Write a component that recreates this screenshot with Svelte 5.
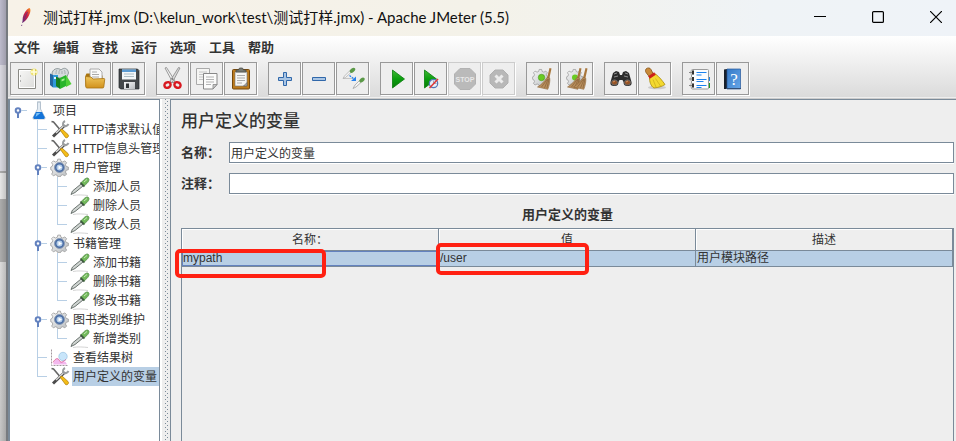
<script>
  const menus = ['文件', '编辑', '查找', '运行', '选项', '工具', '帮助'];

  const groups = [
    [['new', '新建'], ['templates', '模板'], ['open', '打开'], ['save', '保存']],
    [['cut', '剪切'], ['copy', '复制'], ['paste', '粘贴']],
    [['plus', '全部展开'], ['minus', '全部折叠'], ['toggle', '切换']],
    [['play', '启动'], ['playnow', '不停顿开始'], ['stop', '停止', true], ['shutdown', '关闭', true]],
    [['clear', '清除'], ['clearall', '清除全部']],
    [['search', '搜索'], ['broom', '重置搜索']],
    [['list', '函数助手'], ['help', '帮助文档']]
  ];

  const tree = [
    {
      icon: 'flask', label: '项目', children: [
        { icon: 'tools', label: 'HTTP请求默认值' },
        { icon: 'tools', label: 'HTTP信息头管理器' },
        {
          icon: 'gear', label: '用户管理', children: [
            { icon: 'dropper', label: '添加人员' },
            { icon: 'dropper', label: '删除人员' },
            { icon: 'dropper', label: '修改人员' }
          ]
        },
        {
          icon: 'gear', label: '书籍管理', children: [
            { icon: 'dropper', label: '添加书籍' },
            { icon: 'dropper', label: '删除书籍' },
            { icon: 'dropper', label: '修改书籍' }
          ]
        },
        {
          icon: 'gear', label: '图书类别维护', children: [
            { icon: 'dropper', label: '新增类别' }
          ]
        },
        { icon: 'chart', label: '查看结果树' },
        { icon: 'tools', label: '用户定义的变量', selected: true }
      ]
    }
  ];

  let name = $state('用户定义的变量');
  let comment = $state('');
</script>

{#snippet gearBody()}
  <path d="M10 3h3l.6 2.400 2 .9L18 5l2 2-1.300 2.300.8 2 2.500.7v3l-2.500.7-.8 2L20 20l-2 2-2.400-1.300-2 .8L13 23h-3l-.6-1.500-2-.8L5 22l-2-2 1.300-2.300-.8-2L2 15v-3l1.500-.7.8-2L3 7l2-2 2.400 1.300 2-.9z" fill="url(#silver)" stroke="#999" stroke-width=".9" />
{/snippet}

{#snippet brush()}
  <path d="M19.500 2l2 .6-2.200 10-2.300-.6z" fill="#a8763c" />
  <path d="M17 11.500l2.800.8c.2 3.500-.4 7-2 11L7.500 21c4-2.500 7-5.500 9.500-9.500z" fill="#b98f5d" stroke="#8d6538" stroke-width=".6" />
  <path d="M17.500 13l-6 8M18.200 13l-3.700 9M19 13l-2 9" stroke="#7c5730" stroke-width=".6" fill="none" />
{/snippet}

{#snippet toolIcon(kind)}
  <svg width="25" height="25" viewBox="0 0 25 25" aria-hidden="true">
    {#if kind === 'new'}
      <path d="M4.500 3.500h17v19h-17z" fill="#fff" stroke="#8a8a85" />
      <path d="M6 5h14v16H6z" fill="url(#paper)" />
      <path d="M6 10h1M6 15h1" stroke="#777" />
      <circle cx="20" cy="6" r="3.500" fill="#f2e24c" opacity=".75" /><path d="M20 3v6M17 6h6" stroke="#fffde0" stroke-width="1.500" />
    {:else if kind === 'templates'}
      <path d="M4 8c0-5 6-7 9-4 3-3 7-2 7.500 3l-2 5H5z" fill="#d5dadc" stroke="#7f898c" stroke-width=".8" />
      <path d="M8 8c0-2 0-3 1-4M11 8c0-2 0-3 1-4M14 8V5M17 8c0-2 0-3-1-4" stroke="#9aa2a6" fill="none" stroke-width=".8" />
      <path d="M2 7.500l3 1.500v12.500L2 19z" fill="#2565a0" />
      <path d="M5 9h5v12.500H5z" fill="#2f98db" /><path d="M6 11h2v2H6z" fill="#e6f4ff" />
      <path d="M8 10.500l4 2v10.500l-4-3z" fill="#158020" />
      <path d="M12 12l6-3v11l-6 3z" fill="#29b52b" />
      <path d="M18 9l5.500 9-5.500 3z" fill="#50cf38" /><path d="M13.500 13.500l3-1.200v2l-3 1.200z" fill="#a6ef91" />
    {:else if kind === 'open'}
      <path d="M3.500 9.500l1-2h5l2 2h9v11h-17z" fill="#a8740e" />
      <path d="M8 3h9l3 3v9H8z" fill="#fafafa" stroke="#999" stroke-width=".8" />
      <path d="M10 6h5M10 8.500h7M10 11h7" stroke="#aaa" />
      <path d="M3.500 10.500l5.500.5 2 2 11-.5c.6 0 .8.5.7 1l-.9 7.500c-.1.700-.5 1-1.300 1H5c-.8 0-1.200-.5-1.200-1.200z" fill="url(#folder)" stroke="#a87211" stroke-width=".8" />
    {:else if kind === 'save'}
      <path d="M3 3h18.500L23 4.500V23H4.500L3 21.500z" fill="#44484a" stroke="#24282b" stroke-width=".7" />
      <path d="M6 3.500h14v10H6z" fill="#f1f6f8" /><path d="M6 3.500h14v2.500H6z" fill="#5a9bd2" />
      <path d="M8 8h10M8 10.500h10" stroke="#aabcc4" />
      <path d="M8 16h11v7H8z" fill="url(#silver)" /><path d="M10 17.500h3v4.500h-3z" fill="#303436" />
    {:else if kind === 'cut'}
      <path d="M5 2l1.500-.5L15 15l-2 2z" fill="#eee" stroke="#858585" stroke-width=".8" />
      <path d="M20 2l-1.500-.5L10 15l2 2z" fill="#dadada" stroke="#858585" stroke-width=".8" />
      <circle cx="12.500" cy="13" r=".8" fill="#555" />
      <ellipse cx="7.500" cy="19" rx="3.200" ry="2.700" transform="rotate(-30 7.500 19)" fill="none" stroke="#d81920" stroke-width="2.400" />
      <ellipse cx="17.500" cy="19" rx="3.200" ry="2.700" transform="rotate(30 17.500 19)" fill="none" stroke="#d81920" stroke-width="2.400" />
    {:else if kind === 'copy'}
      <path d="M2.500 2.500h13v16h-13z" fill="#f5f5f3" stroke="#aaa" /><path d="M5 6h8M5 8.500h8M5 11h4M5 13.500h4" stroke="#c6c6c6" />
      <path d="M9.500 7.500h13.500v11l-4 4.500H9.500z" fill="#fbfbfa" stroke="#888" /><path d="M12 11h8M12 13.500h8M12 16h8M12 18.500h5" stroke="#b3b3b3" />
      <path d="M23 18.500h-4V23z" fill="#ccc" stroke="#888" stroke-width=".8" />
    {:else if kind === 'paste'}
      <rect x="4.500" y="3.500" width="17" height="19.500" rx="1" fill="#bd7b1c" stroke="#75480c" />
      <path d="M7 6h12v14H7z" fill="#f6f6f4" stroke="#777" stroke-width=".6" />
      <path d="M9 9.500h8M9 12h8M9 14.500h8M9 17h5" stroke="#aaa" />
      <path d="M8 6V4h2.500l1-2h3l1 2H18v2z" fill="#777a73" stroke="#454843" stroke-width=".7" />
      <path d="M15.500 20l3.500-3.500V20z" fill="#aaa" stroke="#555" stroke-width=".5" />
    {:else if kind === 'plus'}
      <path d="M11.500 6.500h3v5h5v3h-5v5h-3v-5h-5v-3h5z" fill="#a9c5e4" stroke="#3168aa" />
    {:else if kind === 'minus'}
      <path d="M6.500 11.500h13v3h-13z" fill="#a9c5e4" stroke="#3168aa" />
    {:else if kind === 'toggle'}
      <path d="M3 12.500h10" fill="none" stroke="#bbb" stroke-width=".8" />
      <path d="M10 4.500L4.500 10l-1.500 2.500 2.500-1L11.500 6z" fill="#f4f4f4" stroke="#aaa" stroke-width=".7" />
      <ellipse cx="12.500" cy="4.300" rx="3.200" ry="1.900" transform="rotate(-40 12.500 4.300)" fill="#5b9947" />
      <path d="M19.500 14.500L15 19l-2 3.500 3-1.500 5-4.500z" fill="#f4f4f4" stroke="#999" stroke-width=".7" />
      <ellipse cx="22" cy="14" rx="3" ry="1.900" transform="rotate(-40 22 14)" fill="#5b9947" />
      <path d="M9.500 9.500l4.500 3.500" stroke="#2882ed" stroke-width="1.200" stroke-dasharray="2 1" /><path d="M16 10.500v4.500h-5z" fill="#2882ed" />
    {:else if kind === 'play'}
      <path d="M8.500 4l12 9-12 9z" fill="url(#go)" stroke="#087e0b" stroke-width=".8" />
    {:else if kind === 'playnow'}
      <path d="M6.500 4l12 9-12 9z" fill="url(#go)" stroke="#087e0b" stroke-width=".8" />
      <circle cx="15.500" cy="17.500" r="4.200" fill="#e6eef8" stroke="#5277b5" stroke-width="1.200" />
      <path d="M15.500 14.500v3h3" stroke="#9aa8c0" fill="none" /><path d="M11.500 22L20 13" stroke="#e03735" stroke-width="1.500" />
    {:else if kind === 'stop'}
      <path d="M8 2.500h10l5.500 5.500v10L18 23.500H8L2.500 18V8z" fill="#bababa" stroke="#b2b2b2" />
      <text x="13" y="16" text-anchor="middle" font-family="Liberation Sans, sans-serif" font-size="7" font-weight="700" fill="#e8e8e8">STOP</text>
    {:else if kind === 'shutdown'}
      <path d="M9 4h8l5 5v8l-5 5H9l-5-5V9z" fill="#b8b8b8" stroke="#b0b0b0" />
      <path d="M9.500 9.500l7 7M16.500 9.500l-7 7" stroke="#ececec" stroke-width="3" />
    {:else if kind === 'clear'}
      <g transform="translate(1 1) scale(.82)">{@render gearBody()}</g>
      <circle cx="11.500" cy="11.500" r="3.200" fill="#69cb22" stroke="#469719" stroke-width=".6" />
      {@render brush()}
    {:else if kind === 'clearall'}
      <g transform="translate(1 1) scale(.82)">{@render gearBody()}</g>
      <circle cx="11" cy="11.500" r="3" fill="#69cb22" />
      <g transform="translate(-4 0)">{@render brush()}</g>
      <g transform="translate(2 0)">{@render brush()}</g>
    {:else if kind === 'search'}
      <path d="M5 7l3-2 3 1 1 3h2l1-3 3-1 3 2 2.500 9c.5 3-1 4-4 4s-4-1.500-4-4l-1-2h-3l-1 2c0 2.500-1 4-4 4s-4.500-1-4-4z" fill="#2b2b2b" />
      <path d="M6 8l3-1M20 8l-3-1M6 11l4-1M20 11l-4-1" stroke="#8b8b8b" />
      <ellipse cx="6.500" cy="16.500" rx="3" ry="2.600" fill="#985526" stroke="#696969" /><ellipse cx="19.500" cy="16.500" rx="3" ry="2.600" fill="#985526" stroke="#696969" />
      <path d="M5 16l2-1M18 16l2-1" stroke="#d39162" />
    {:else if kind === 'broom'}
      <ellipse cx="15" cy="21.500" rx="9" ry="1.800" fill="#aaa" opacity=".5" />
      <path d="M4 3c1.500-1.500 4-1.500 5 .5l2.500 5-4 2.500L4 6.500C3.300 5.300 3.300 4 4 3z" fill="#c98a3a" stroke="#865214" stroke-width=".8" />
      <path d="M7.500 11.500l6-3.500c4 3 7 7 9.500 10.500-3 2-6.500 3-11 3.500C8.500 20 7.500 15.500 7.500 11.500z" fill="#f3d92f" stroke="#a98b0a" stroke-width=".8" />
      <path d="M7 11.500l6-4" stroke="#cc2118" stroke-width="3" /><path d="M11 13.500l3 7.500M13.500 12.500l5 7.500" stroke="#c9ab18" stroke-width=".7" />
    {:else if kind === 'list'}
      <path d="M22 11h2v4h-2z" fill="#2183df" /><path d="M22 17h2v5h-2z" fill="#1a9a22" />
      <rect x="5.500" y="3.500" width="17" height="19.500" rx="1" fill="#fbfcff" stroke="#9a9a9a" />
      <path d="M10.500 6.500h10M10.500 9h5M10.500 13.500h10M10.500 15.500h7M10.500 19.500h10M10.500 21.500h5" stroke="#1a82ef" />
      <path d="M4 6.500h4M4 13h4M4 19.500h4" stroke="#ccc" stroke-width="4" /><path d="M6 4.500h2v4H6zM6 11h2v4H6zM6 17.500h2v4H6z" fill="#333" /><path d="M3 6.500h3M3 13h3M3 19.500h3" stroke="#888" />
    {:else if kind === 'help'}
      <path d="M4 3.500L7 3v20H4z" fill="#18202b" /><path d="M7 3h13.500v20H7z" fill="url(#book)" stroke="#25569a" stroke-width=".7" /><path d="M6 22.500h15" stroke="#335077" />
      <text x="14" y="18.500" text-anchor="middle" font-family="Liberation Serif, serif" font-size="17" fill="#fff">?</text>
    {/if}
  </svg>
{/snippet}

{#snippet treeIcon(kind)}
  <svg class="node-icon" width="20" height="19" viewBox="0 0 20 19" aria-hidden="true">
    {#if kind === 'flask'}
      <path d="M7.500 1h3v7l4.500 8.500c.5 1-.3 1.500-1 1.500H4c-1 0-1.500-.7-1-1.500L7.500 8z" fill="#e3ebf2" stroke="#9bacbd" stroke-width=".7" />
      <path d="M6 11h6l2.800 5.500-.8 1.500H4l-.8-1.500z" fill="#1373d8" /><path d="M6.500 12h4l-5 4z" fill="#7bc1f5" /><path d="M7 1h4" stroke="#bbc7d1" />
    {:else if kind === 'tools'}
      <path d="M1.500 1.500l2 .5 6 7" fill="none" stroke="#666" stroke-width="1.600" />
      <path d="M3 16.500L15 5" stroke="#4b4b4b" stroke-width="3" /><path d="M6 13L15 4.500" stroke="#d9d9d9" stroke-width="1.400" />
      <path d="M15 1c-2 1-2.500 3-1.500 4.500 1.500 1.300 4 .5 5-1.500" fill="none" stroke="#9a9d9f" stroke-width="2" />
      <path d="M10 10l2-1 6 5.500c1.500 1.500-.5 4-2.500 3z" fill="#f4bd17" stroke="#a87708" stroke-width=".7" />
    {:else if kind === 'gear'}
      <g transform="translate(-1 -1.500) scale(.88)">{@render gearBody()}</g>
      <circle cx="9.500" cy="9.500" r="5" fill="#4a6da5" stroke="#8b9cb5" /><circle cx="9.500" cy="9.500" r="3" fill="#b3cdea" /><path d="M8.500 7.500l3.500 2-3.500 2z" fill="#fff" />
    {:else if kind === 'dropper'}
      <path d="M3 18.500c5-1 10-.5 15 0" stroke="#c9c9c9" fill="none" stroke-width=".8" />
      <path d="M11 7l2 2L5 15.500 1 17.500 2.500 14z" fill="#cfd4d1" stroke="#6a736f" stroke-width="1" />
      <path d="M10.500 5.500l4 4" stroke="#3d5a3e" stroke-width="1.800" />
      <path d="M11.500 5.500C14 2 17 0 18.500 1.500s-.5 4.500-4 7z" fill="#72b95b" stroke="#4d8542" stroke-width=".7" /><path d="M14 5l3-2.500" stroke="#c3e8b4" />
    {:else if kind === 'chart'}
      <path d="M1.500 1.500v16H18" fill="none" stroke="#a3989e" stroke-dasharray="2 1" />
      <circle cx="13" cy="8.500" r="4.200" fill="#c8e5fa" stroke="#8dbbdc" stroke-width=".6" />
      <path d="M3 16.500c1-4 3-6 5-6 2 3 3 4 4.500 3 2-1 3.500 0 4.500 3z" fill="#f3b8ee" /><path d="M3 14.500c3-5 5-5 7-1 2 2 4-1 6-2" stroke="#dc568c" fill="none" stroke-width=".8" />
    {/if}
  </svg>
{/snippet}

{#snippet branch(nodes)}
  <ul>
    {#each nodes as node}
      <li>
        <div class="node">
          <span class="handle">
            {#if node.children}
              <svg width="20" height="19" viewBox="0 0 20 19" aria-hidden="true"><path d="M8 12v5" stroke="#6382bf" stroke-width="2" /><circle cx="8" cy="9.500" r="2.300" fill="#fff" stroke="#6382bf" stroke-width="2" /><path d="M11 9.500h6" stroke="#b8cfe5" /></svg>
            {/if}
          </span>
          {@render treeIcon(node.icon)}
          <span class="label" class:selected={node.selected}>{node.label}</span>
        </div>
        {#if node.children}{@render branch(node.children)}{/if}
      </li>
    {/each}
  </ul>
{/snippet}

<svg class="defs" width="0" height="0" aria-hidden="true">
  <defs>
    <linearGradient id="silver" x2="1" y2="1"><stop stop-color="#f7f7f7" /><stop offset="1" stop-color="#b9bdc0" /></linearGradient>
    <linearGradient id="paper" x2="1" y2="1"><stop stop-color="#f5f5f4" /><stop offset="1" stop-color="#dededc" /></linearGradient>
    <linearGradient id="folder" x2="0" y2="1"><stop stop-color="#efc65c" /><stop offset="1" stop-color="#d1911c" /></linearGradient>
    <linearGradient id="go" x2="0" y2="1"><stop stop-color="#42ba36" /><stop offset=".5" stop-color="#0b9e0e" /><stop offset="1" stop-color="#087c09" /></linearGradient>
    <linearGradient id="book" x2="1" y2="1"><stop stop-color="#3579c7" /><stop offset="1" stop-color="#66a7e9" /></linearGradient>
    <linearGradient id="feather" x1="1" x2="0" y2="1"><stop stop-color="#f79a23" /><stop offset=".45" stop-color="#d4213f" /><stop offset="1" stop-color="#682776" /></linearGradient>
  </defs>
</svg>

<div class="screen">
  <div class="desktop"></div>
  <main class="window">
    <header class="titlebar">
      <svg width="14" height="20" viewBox="0 0 14 20" aria-hidden="true"><path d="M9.500 1c1.500 1 1.200 4-.3 7S6 14 3 15.500c-1-4 0-7 1.800-10C6 3.500 8 1 9.500 1z" fill="url(#feather)" /><path d="M7.500 5L3 14l-1.500 5" stroke="#66307c" fill="none" stroke-width=".8" stroke-dasharray="12 2" /></svg>
      <h1>测试打样.jmx (D:\kelun_work\test\测试打样.jmx) - Apache JMeter (5.5)</h1>
      <div class="controls">
        <button aria-label="最小化"><svg width="12" height="12" viewBox="0 0 12 12"><path d="M0 5.500h12" stroke="#000" /></svg></button>
        <button aria-label="最大化"><svg width="12" height="12" viewBox="0 0 12 12"><rect x=".6" y=".6" width="10.800" height="10.800" rx="1" fill="none" stroke="#000" stroke-width="1.200" /></svg></button>
        <button aria-label="关闭"><svg width="12" height="12" viewBox="0 0 12 12"><path d="M0 0l12 12M12 0L0 12" stroke="#000" stroke-width="1.200" /></svg></button>
      </div>
    </header>
    <div class="chrome">
      <nav>
        {#each menus as menu}<button>{menu}</button>{/each}
      </nav>
      <div class="toolbar">
        {#each groups as group}
          <div class="group">
            {#each group as [kind, title, disabled]}
              <button aria-label={title} {disabled}>{@render toolIcon(kind)}</button>
            {/each}
          </div>
        {/each}
      </div>
    </div>
    <div class="body">
      <aside class="tree">{@render branch(tree)}</aside>
      <div class="divider"></div>
      <section class="panel">
        <h2>用户定义的变量</h2>
        <div class="field"><label for="name">名称：</label><input id="name" type="text" bind:value={name} /></div>
        <div class="field"><label for="comment">注释：</label><input id="comment" type="text" bind:value={comment} /></div>
        <h3>用户定义的变量</h3>
        <div class="table-area">
          <table>
            <thead><tr><th>名称：</th><th>值</th><th>描述</th></tr></thead>
            <tbody>
              <tr>
                <td class="focused">mypath<span class="mark first"></span></td>
                <td>/user<span class="mark second"></span></td>
                <td>用户模块路径</td>
              </tr>
            </tbody>
          </table>
        </div>
      </section>
    </div>
  </main>
</div>

<style>
  :global(body) { margin: 0; }
  .defs { position: absolute; }
  .screen {
    display: flex;
    min-height: 100vh;
    background: #eee;
    color: #333;
    font: 12px/19px "Liberation Sans", "Noto Sans CJK SC", sans-serif;
  }
  button { padding: 0; border: 0; background: none; color: inherit; font: inherit; }
  svg { display: block; flex: none; }
  .desktop {
    flex: none;
    width: 6px;
    background:
      linear-gradient(90deg, transparent, rgba(0, 0, 0, .15)),
      linear-gradient(#bcbacb 65px, #d9d8e0 65px 171px, #aaa 171px 173px, #e6e6e6 173px 199px, #acacac 199px 262px, #dcdcdc 262px, #c4c4c4);
  }
  .window {
    flex: 1;
    min-width: 0;
    display: flex;
    flex-direction: column;
    border-left: 2px solid #777b80;
  }
  .titlebar {
    display: flex;
    align-items: center;
    height: 36px;
    padding: 0 14px 0 12px;
    background: linear-gradient(90deg, #f7f2e8, #f4f2e9 50%, #eff3f6 80%, #eff3f8);
  }
  .titlebar > svg { margin-bottom: 2px; }
  h1 {
    flex: 1;
    margin: 0 0 2px 9px;
    color: #111;
    font: 15px/24px Lato, "Noto Sans CJK SC", sans-serif;
    white-space: nowrap;
  }
  .controls { display: flex; gap: 46px; margin-bottom: 2px; }
  .chrome {
    height: 61px;
    background: linear-gradient(#fff, #dadada);
    border-bottom: 1px solid #ccc;
    box-shadow: inset 0 -1px #eee;
    padding-bottom: 1px;
  }
  nav { display: flex; gap: 13px; padding: 1px 6px 3px; }
  nav button { font-size: 13px; line-height: 22px; font-weight: 700; }
  .toolbar { display: flex; gap: 11px; padding-left: 2px; }
  .group { display: flex; gap: 1px; }
  .group button {
    padding: 3px;
    border: 1px solid #999;
    background: #eee;
    box-shadow: 1px 1px #fff;
  }
  .group button:disabled { border-color: #ccc; }
  .body { flex: 1; display: flex; min-height: 0; }
  .tree {
    flex: none;
    box-sizing: border-box;
    width: 152px;
    overflow: hidden;
    padding-top: 1px;
    background: #fff;
    border: solid #7a8a99;
    border-width: 1px 1px 0 2px;
  }
  ul { margin: 0; padding: 0; list-style: none; }
  ul ul { padding-left: 20px; }
  ul ul > li {
    background:
      linear-gradient(#b8cfe5, #b8cfe5) 7px 0 / 1px 100% no-repeat,
      linear-gradient(#b8cfe5, #b8cfe5) 7px 9px / 10px 1px no-repeat;
  }
  ul ul > li:last-child {
    background:
      linear-gradient(#b8cfe5, #b8cfe5) 7px 0 / 1px 10px no-repeat,
      linear-gradient(#b8cfe5, #b8cfe5) 7px 9px / 10px 1px no-repeat;
  }
  .node { display: flex; height: 19px; white-space: nowrap; }
  .handle { flex: none; width: 20px; }
  .label {
    box-sizing: border-box;
    height: 19px;
    margin-left: 2px;
    padding: 1px 2px 0 1px;
  }
  .selected { background: #b8cfe5; }
  .divider {
    flex: none;
    width: 10px;
    background:
      linear-gradient(90deg, #fff 2px, #eee 2px 5px, transparent 5px 8px, #eee 8px),
      conic-gradient(from 270deg at 1px 1px, #7a8a99 90deg, transparent 0) 5px 0 / 4px 4px,
      conic-gradient(from 270deg at 1px 1px, #7a8a99 90deg, transparent 0) 7px 2px / 4px 4px,
      #eee;
  }
  .panel {
    flex: 1;
    min-width: 0;
    display: flex;
    flex-direction: column;
    padding: 10px 2px 0 10px;
    border: solid #7a8a99;
    border-width: 1px 0 0 1px;
  }
  h2 { margin: 0 0 8px; font-size: 17px; line-height: 24px; font-weight: 500; }
  .field { display: flex; margin-bottom: 10px; }
  .field label { width: 48px; font-size: 13px; line-height: 22px; height: 21px; font-weight: 700; }
  input {
    flex: 1;
    min-width: 0;
    box-sizing: border-box;
    height: 21px;
    padding: 0 1px;
    border: 1px solid #7a8a99;
    border-radius: 0;
    outline: 0;
    background: #fff;
    box-shadow: 0 1px #fff;
    color: #333;
    font: inherit;
  }
  h3 { margin: 0 0 2px; font-size: 13px; line-height: 22px; text-align: center; }
  .table-area { flex: 1; border: solid #7a8a99; border-width: 1px 1px 0; }
  table { width: 100%; table-layout: fixed; border-collapse: separate; border-spacing: 0; }
  th, td { padding: 0; border: solid #7a8a99; border-width: 0 1px 1px 0; }
  th { padding-top: 2px; height: 19px; line-height: 19px; font-weight: 400; box-shadow: inset 1px 1px #fff; }
  td { position: relative; height: 15px; padding-left: 1px; line-height: 15px; background: #b8cfe5; }
  .focused { box-shadow: inset 0 0 0 1px #6382bf; }
  .mark {
    position: absolute;
    z-index: 1;
    box-sizing: border-box;
    border: 4px solid #ff2012;
    border-radius: 5px;
    pointer-events: none;
  }
  .first { left: -7px; top: -2px; width: 151px; height: 29px; }
  .second { left: -3px; top: -8px; width: 153px; height: 32px; }
</style>
